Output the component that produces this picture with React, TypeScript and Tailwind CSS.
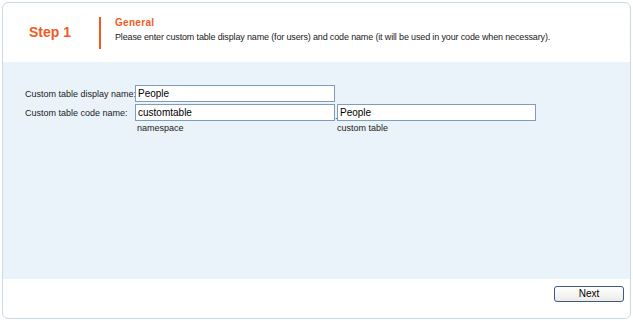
const field =
  "h-[17px] border border-[#7f9db9] bg-white px-[2px] text-[10px] text-black outline-none";

export default function App() {
  return (
    <div className="w-[633px] h-[321px] bg-white p-[2px] font-['Liberation_Sans',Arial,sans-serif] text-[9px] text-[#1a1a1a]">
      <div className="flex h-full flex-col overflow-hidden rounded-[6px] border border-[#c9d9e6] bg-white">
        {/* header */}
        <div className="flex h-[59px] shrink-0 items-center">
          <div className="w-[96px] shrink-0 pl-[26px] text-[14px] font-bold text-[#f15a1d]">Step 1</div>
          <div className="h-[32px] w-[2px] shrink-0 bg-[#f15a1d]" />
          <div className="flex flex-col pl-[14px] pb-[5px]">
            <div className="text-[10px] font-bold leading-[14px] tracking-[0.3px] text-[#f15a1d]">General</div>
            <div className="whitespace-nowrap leading-[14px] tracking-[-0.15px]">
              Please enter custom table display name (for users) and code name (it will be used in your code when necessary).
            </div>
          </div>
        </div>

        {/* body */}
        <div className="flex-1 bg-[#ebf3fa] pl-[22px] pt-[23px]">
          <div className="grid grid-cols-[110px_auto] gap-y-[2px]">
            <div className="whitespace-nowrap pt-[3px]">Custom table display name:</div>
            <input readOnly value="People" className={field + " w-[200px]"} />
            <div className="whitespace-nowrap pt-[3px]">Custom table code name:</div>
            <div className="flex items-start">
              <div className="flex flex-col">
                <input readOnly value="customtable" className={field + " w-[200px]"} />
                <span className="pl-[2px] pt-[1px] leading-[13px]">namespace</span>
              </div>
              <span className="w-[2px] pt-[8px] leading-[8px]">.</span>
              <div className="flex flex-col">
                <input readOnly value="People" className={field + " w-[199px]"} />
                <span className="pt-[1px] leading-[13px]">custom table</span>
              </div>
            </div>
          </div>
        </div>

        {/* footer */}
        <div className="flex h-[39px] shrink-0 items-start justify-end pr-[6px] pt-[7px]">
          <button className="h-[16px] w-[70px] rounded-[3px] border border-[#3c5a85] bg-gradient-to-b from-white to-[#ecebe6] text-[10px] leading-[14px] text-black">
            Next
          </button>
        </div>
      </div>
    </div>
  );
}
